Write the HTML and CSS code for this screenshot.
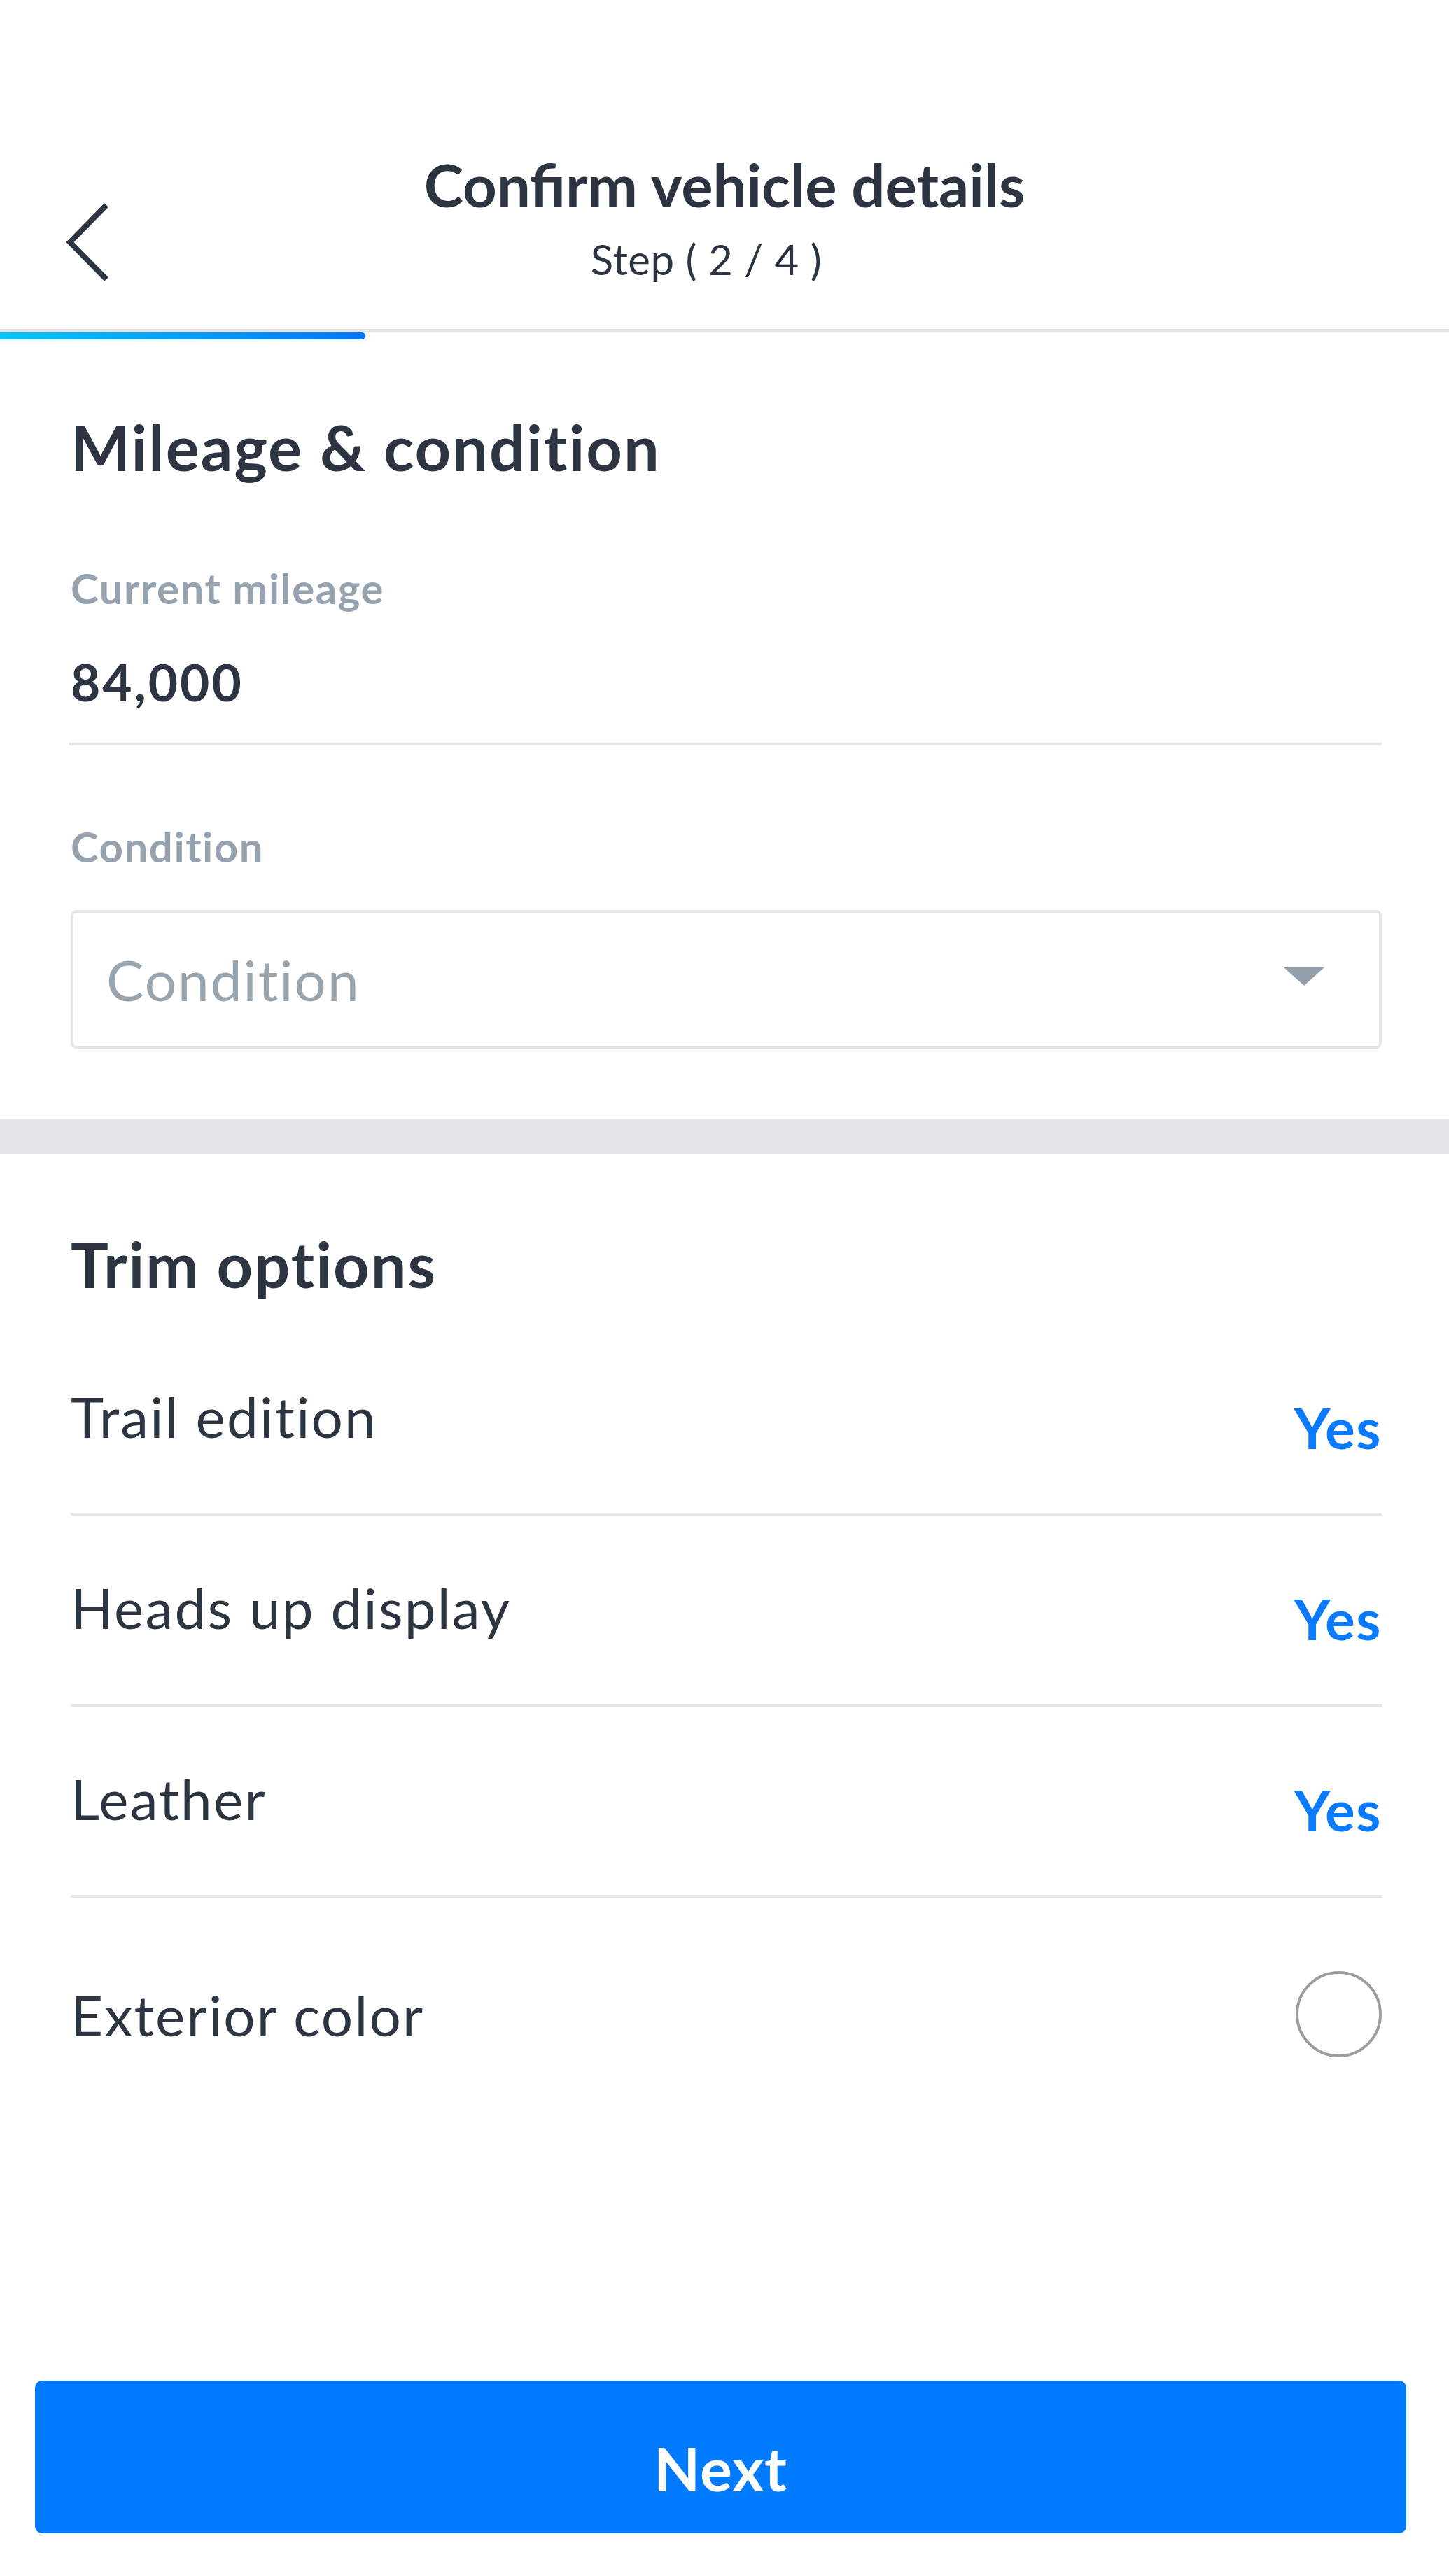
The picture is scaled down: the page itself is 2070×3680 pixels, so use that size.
FILE: index.html
```html
<!DOCTYPE html>
<html>
<head>
<meta charset="utf-8">
<link rel="stylesheet" href="styles.css">
</head>
<body>
<div class="page">
  <header class="topbar">
    <button class="back" aria-label="Back">
      <svg width="70" height="112" viewBox="0 0 70 112"><polyline points="60,3 8,56 60,109" fill="none" stroke="#2c3541" stroke-width="8" stroke-linejoin="miter"/></svg>
    </button>
    <div class="titles">
      <div class="title">Confirm vehicle details</div>
      <div class="step">Step ( 2 / 4 )</div>
    </div>
    <div></div>
  </header>
  <div class="progress">
    <div class="track"></div>
    <div class="fill" style="width:522px"></div>
  </div>

  <section class="section mileage">
    <h2 class="heading">Mileage &amp; condition</h2>
    <div class="field">
      <div class="label">Current mileage</div>
      <div class="value">84,000</div>
    </div>
    <div class="field cond">
      <div class="label">Condition</div>
      <div class="select">
        <span class="placeholder">Condition</span>
        <svg class="caret" width="58" height="26" viewBox="0 0 58 26"><polygon points="0,0 58,0 29,26" fill="#939faa"/></svg>
      </div>
    </div>
  </section>

  <div class="band"></div>

  <section class="section trim">
    <h2 class="heading">Trim options</h2>
    <div class="row"><span class="name">Trail edition</span><span class="yes">Yes</span></div>
    <div class="row"><span class="name">Heads up display</span><span class="yes">Yes</span></div>
    <div class="row"><span class="name">Leather</span><span class="yes">Yes</span></div>
    <div class="row last"><span class="name">Exterior color</span><span class="swatch"></span></div>
  </section>

  <footer class="footer">
    <button class="next">Next</button>
  </footer>
</div>
</body>
</html>
```

FILE: styles.css
```css
* { box-sizing: border-box; }
html, body { margin: 0; padding: 0; background: #ffffff; }
body {
  font-family: "Lato", "Noto Sans", sans-serif;
  color: #2c3541;
}
.page {
  width: 2070px;
  min-height: 3680px;
  display: flex;
  flex-direction: column;
}
.topbar {
  display: grid;
  grid-template-columns: 1fr auto 1fr;
  padding-top: 213px;
  height: 470px;
}
.back {
  border: 0;
  background: none;
  padding: 0;
  margin: 77px 0 0 92px;
  width: 70px;
  height: 112px;
  align-self: start;
  justify-self: start;
}
.back svg { display: block; }
.titles {
  display: flex;
  flex-direction: column;
  align-items: center;
}
.title {
  font-size: 85px;
  line-height: 100px;
  font-weight: 700;
  color: #2b3440;
}
.step {
  font-size: 60px;
  line-height: 70px;
  margin-top: 22px;
  margin-right: 52px;
  letter-spacing: 0.5px;
  color: #2b3440;
}
.progress { height: 15px; }
.track { height: 5px; background: #e3e7ea; }
.fill {
  height: 10px;
  background: linear-gradient(90deg, #00c8ff 0%, #0077ff 100%);
  border-radius: 0 6px 6px 0;
}
.section { padding: 0 96px 0 101px; }
.heading {
  margin: 0;
  font-size: 90px;
  line-height: 100px;
  font-weight: 700;
  letter-spacing: 2px;
  color: #2c3541;
}
.mileage { padding-top: 103px; padding-bottom: 100px; }
.field { display: flex; flex-direction: column; }
.label {
  font-size: 60px;
  line-height: 70px;
  color: #96a2ad;
  font-weight: 700;
  letter-spacing: 1.5px;
  margin-top: 117px;
}
.value {
  margin-top: 59px;
  font-size: 73px;
  line-height: 80px;
  font-weight: 700;
  letter-spacing: 3px;
  padding-bottom: 47px;
  border-bottom: 4px solid #e3e7ea;
  margin-left: -2px;
  padding-left: 2px;
}
.cond .label { margin-top: 109px; }
.select {
  margin-top: 56px;
  height: 198px;
  border: 4px solid #e3e7ea;
  border-radius: 8px;
  display: flex;
  align-items: center;
  justify-content: space-between;
  padding: 0 78px 0 47px;
}
.placeholder {
  font-size: 80px;
  letter-spacing: 2px;
  color: #98a4ae;
}
.caret { display: block; margin-top: -8px; }
.band { height: 50px; background: #e3e7ea; }
.trim { padding-top: 107px; }
.trim .heading { margin-bottom: 37px; }
.row {
  display: flex;
  justify-content: space-between;
  align-items: flex-start;
  padding: 81px 0 88px;
  border-bottom: 4px solid #e3e7ea;
}
.name {
  font-size: 80px;
  line-height: 100px;
  letter-spacing: 2.2px;
  color: #2c3541;
}
.yes {
  font-size: 80px;
  line-height: 64px;
  margin-top: 34px;
  font-weight: 700;
  letter-spacing: 1.5px;
  color: #0a7aff;
}
.row.last {
  border-bottom: 0;
  align-items: center;
  padding: 105px 0 0;
}
.swatch {
  width: 123px;
  height: 123px;
  border-radius: 50%;
  border: 4px solid #9d9d9d;
}
.footer {
  margin-top: auto;
  padding: 0 61px 61px 50px;
}
.next {
  display: block;
  width: 100%;
  height: 218px;
  border: 0;
  border-radius: 10px;
  background: #007aff;
  color: #ffffff;
  font-family: "Lato", "Noto Sans", sans-serif;
  font-size: 86px;
  font-weight: 700;
  letter-spacing: 1px;
  padding-top: 32px;
}
```
